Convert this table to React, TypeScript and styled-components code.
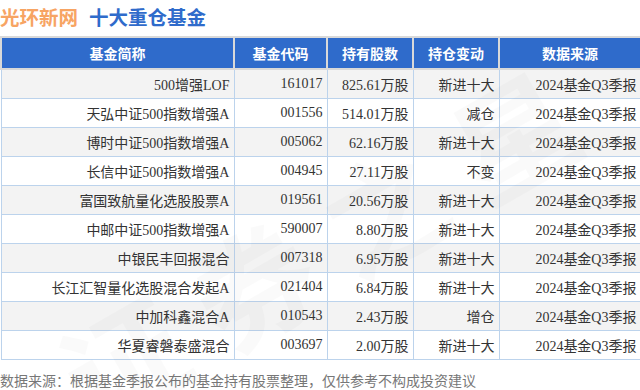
import React from "react";
import styled, { createGlobalStyle } from "styled-components";

const GlobalStyle = createGlobalStyle`
  html, body {
    margin: 0;
    padding: 0;
    background: #ffffff;
  }
  body {
    font-family: "Liberation Serif", "Noto Sans CJK SC", serif;
  }
`;

interface Fund {
  name: string;
  code: string;
  shares: string;
  change: string;
  source: string;
}

const funds: Fund[] = [
  { name: "500增强LOF", code: "161017", shares: "825.61万股", change: "新进十大", source: "2024基金Q3季报" },
  { name: "天弘中证500指数增强A", code: "001556", shares: "514.01万股", change: "减仓", source: "2024基金Q3季报" },
  { name: "博时中证500指数增强A", code: "005062", shares: "62.16万股", change: "新进十大", source: "2024基金Q3季报" },
  { name: "长信中证500指数增强A", code: "004945", shares: "27.11万股", change: "不变", source: "2024基金Q3季报" },
  { name: "富国致航量化选股股票A", code: "019561", shares: "20.56万股", change: "新进十大", source: "2024基金Q3季报" },
  { name: "中邮中证500指数增强A", code: "590007", shares: "8.80万股", change: "新进十大", source: "2024基金Q3季报" },
  { name: "中银民丰回报混合", code: "007318", shares: "6.95万股", change: "新进十大", source: "2024基金Q3季报" },
  { name: "长江汇智量化选股混合发起A", code: "021404", shares: "6.84万股", change: "新进十大", source: "2024基金Q3季报" },
  { name: "中加科鑫混合A", code: "010543", shares: "2.43万股", change: "增仓", source: "2024基金Q3季报" },
  { name: "华夏睿磐泰盛混合", code: "003697", shares: "2.00万股", change: "新进十大", source: "2024基金Q3季报" },
];

const columns = [
  { title: "基金简称", width: 233 },
  { title: "基金代码", width: 93 },
  { title: "持有股数", width: 86 },
  { title: "持仓变动", width: 86 },
  { title: "数据来源", width: 142 },
];

const Page = styled.div`
  position: relative;
  width: 640px;
  height: 390px;
  overflow: hidden;
  background: #fff;
`;

const TitleBar = styled.div`
  display: flex;
  align-items: center;
  gap: 11px;
  height: 36px;
  padding-bottom: 3px;
  box-sizing: border-box;
  font-family: "Noto Sans CJK SC", sans-serif;
  font-size: 19.5px;
  font-weight: 700;
  line-height: 1;
`;

const Brand = styled.span`
  color: #f7a463;
`;

const Heading = styled.span`
  color: #2f6bcb;
`;

const Table = styled.table`
  width: 640px;
  border-collapse: collapse;
  table-layout: fixed;
`;

const Th = styled.th`
  height: 30px;
  padding: 0;
  background: #2f6bcb;
  border: 2px solid #d9d9d9;
  color: #ffffff;
  font-family: "Noto Sans CJK SC", sans-serif;
  font-size: 14px;
  font-weight: 700;
  text-align: center;
`;

const Row = styled.tr<{ $shaded: boolean }>`
  background: ${(p) => (p.$shaded ? "#f3f3f3" : "#ffffff")};
`;

const Td = styled.td`
  height: 28px;
  padding: 0 4px 0 0;
  border: 1px solid #bcd3ec;
  color: #333333;
  font-size: 14px;
  text-align: right;
  white-space: nowrap;
  overflow: hidden;
`;

const Note = styled.div`
  padding: 11px 0 0 0;
  color: #777777;
  font-family: "Noto Sans CJK SC", sans-serif;
  font-size: 14px;
  line-height: 18px;
`;

const Watermark = styled.div`
  position: absolute;
  left: 30px;
  top: 150px;
  transform: rotate(-30deg);
  font-family: "Noto Sans CJK SC", sans-serif;
  font-size: 120px;
  font-weight: 700;
  letter-spacing: 30px;
  color: rgba(0, 0, 0, 0.02);
  pointer-events: none;
  white-space: nowrap;
`;

export default function App() {
  return (
    <Page>
      <GlobalStyle />
      <TitleBar>
        <Brand>光环新网</Brand>
        <Heading>十大重仓基金</Heading>
      </TitleBar>
      <Table>
        <colgroup>
          {columns.map((c) => (
            <col key={c.title} style={{ width: c.width }} />
          ))}
        </colgroup>
        <thead>
          <tr>
            {columns.map((c) => (
              <Th key={c.title}>{c.title}</Th>
            ))}
          </tr>
        </thead>
        <tbody>
          {funds.map((f, i) => (
            <Row key={f.code} $shaded={i % 2 === 0}>
              <Td>{f.name}</Td>
              <Td>{f.code}</Td>
              <Td>{f.shares}</Td>
              <Td>{f.change}</Td>
              <Td>{f.source}</Td>
            </Row>
          ))}
        </tbody>
      </Table>
      <Note>数据来源：根据基金季报公布的基金持有股票整理，仅供参考不构成投资建议</Note>
      <Watermark>证券之星</Watermark>
    </Page>
  );
}
